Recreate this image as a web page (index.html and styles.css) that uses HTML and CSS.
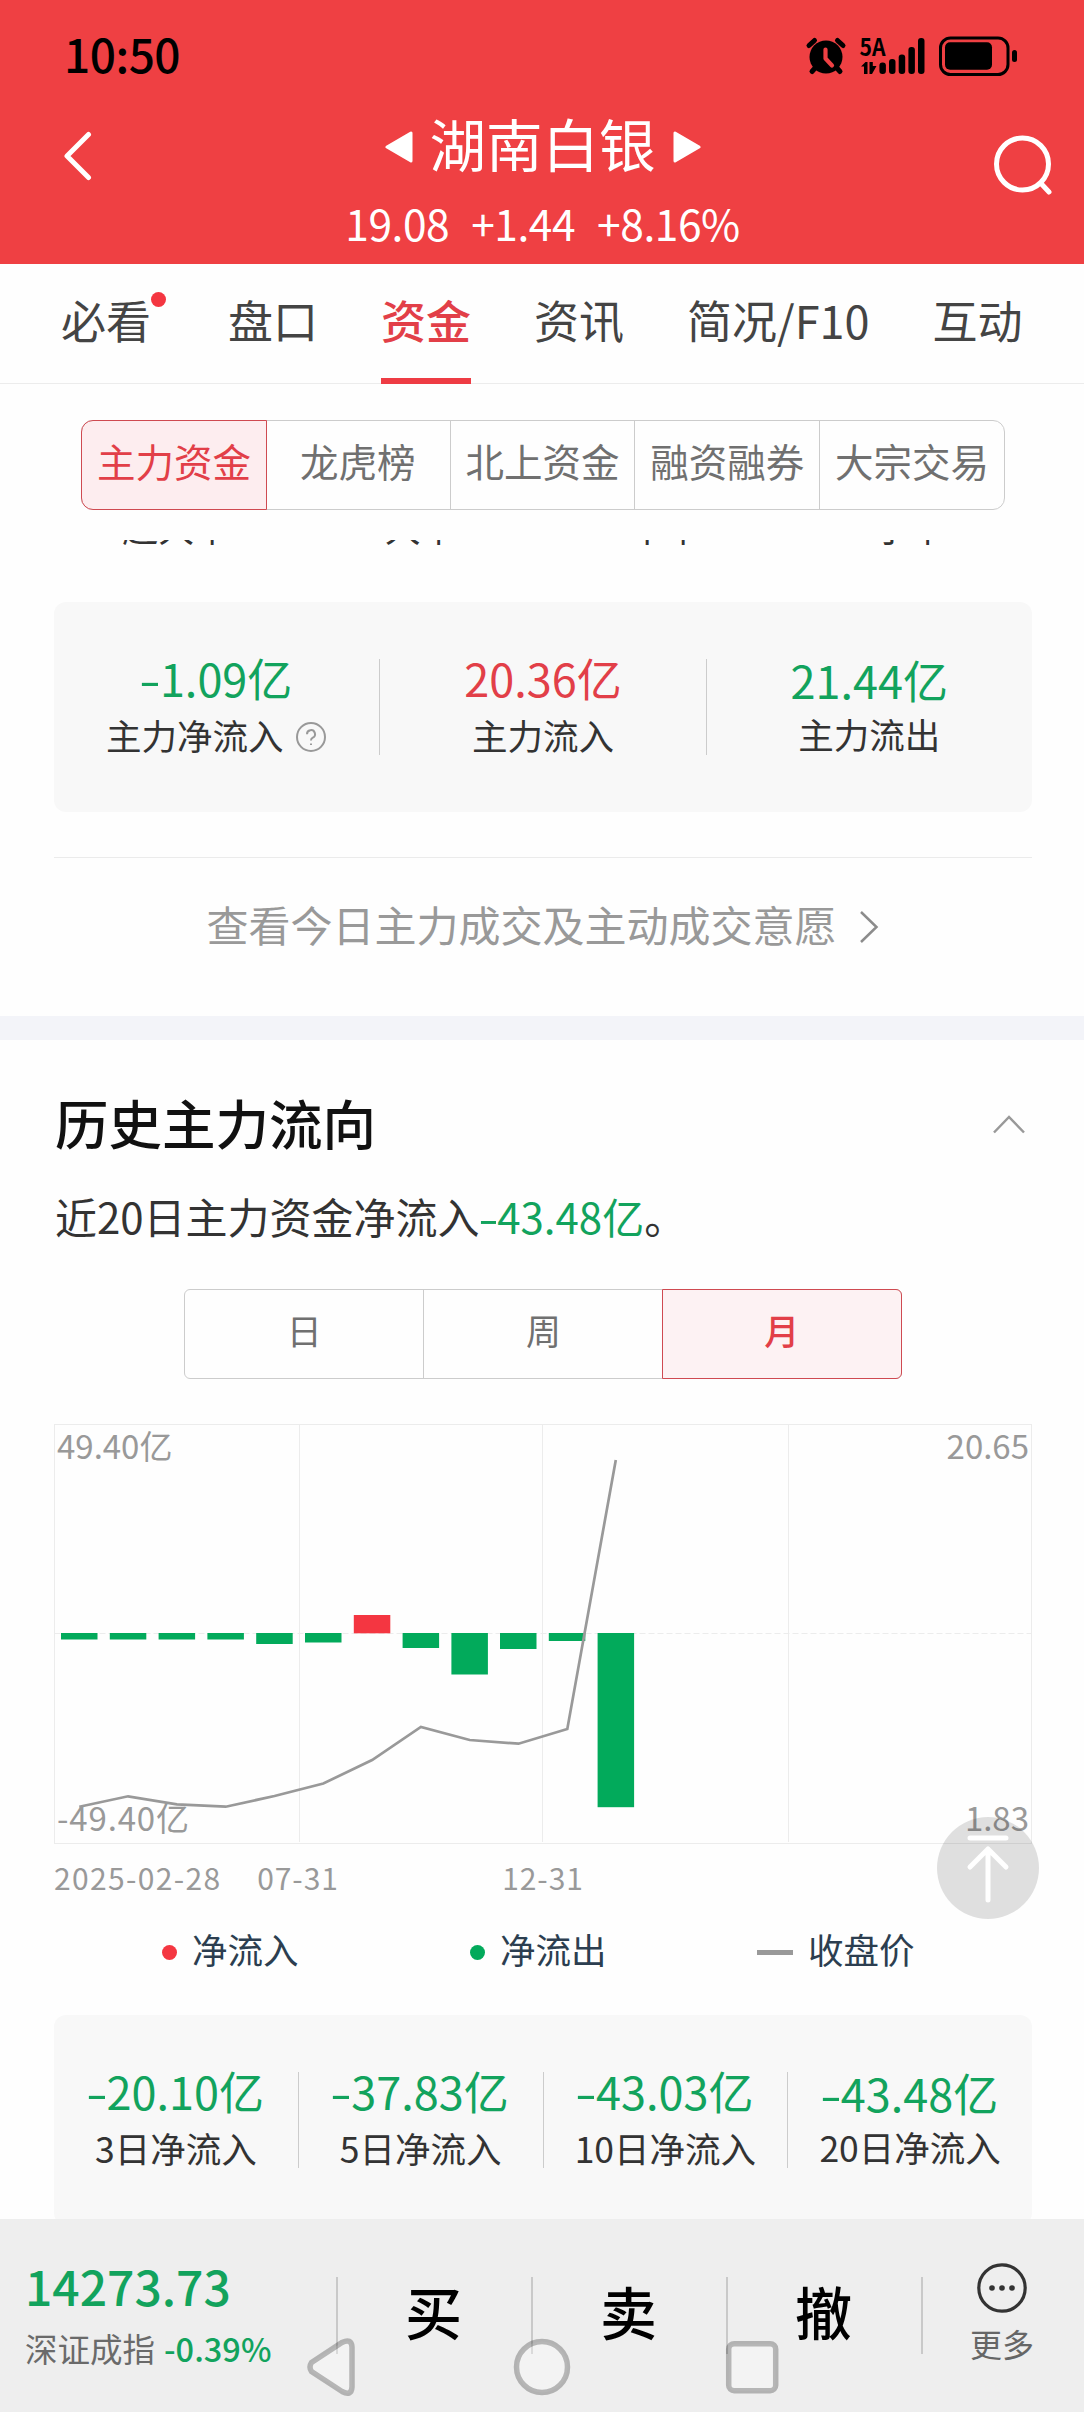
FILE: index.html
```html
<!DOCTYPE html>
<html lang="zh-CN">
<head>
<meta charset="utf-8">
<title>湖南白银 - 资金</title>
<link rel="stylesheet" href="styles.css">
</head>
<body>
<div class="screen">
  <header class="header">
    <div class="status">
      <span class="status-time">10:50</span>
      <svg class="status-icons" width="216" height="44" viewBox="804 34 216 44">
        <circle cx="826" cy="57" r="16.5"/>
        <path d="M809 45.500l5.500-5M843 45.500l-5.500-5" fill="none" stroke="#000" stroke-width="5" stroke-linecap="round"/>
        <path d="M816 67l-4 4.500M836 67l4 4.500" fill="none" stroke="#000" stroke-width="5" stroke-linecap="round"/>
        <path d="M825.500 49.500v9l6.500 7" fill="none" stroke="#ef4043" stroke-width="4.200" stroke-linecap="round" stroke-linejoin="round"/>
        <text class="net-label" x="859.500" y="55.600" textLength="26" lengthAdjust="spacingAndGlyphs">5A</text>
        <path d="M861 66.500l4.500-4.500h2v12h-3.500v-7.500zM869.500 62h3.300v4h3.700l-4.500 8h-2.500z"/>
        <rect x="879.400" y="62.500" width="6.500" height="11.500" rx="3"/>
        <rect x="889" y="59" width="6.500" height="15" rx="3"/>
        <rect x="898.700" y="54.500" width="6.500" height="19.500" rx="3"/>
        <rect x="908.400" y="47" width="6.500" height="27" rx="3"/>
        <rect x="918" y="38" width="6.500" height="36" rx="3"/>
        <rect x="940.500" y="38" width="67.500" height="36.500" rx="10" fill="none" stroke="#000" stroke-width="3"/>
        <rect x="945" y="42.300" width="47" height="27.500" rx="5"/>
        <rect x="1012" y="50" width="5" height="12" rx="2.500"/>
      </svg>
    </div>
    <div class="nav">
      <svg class="nav-back" width="32" height="54" viewBox="0 0 32 54"><path d="M28.500 5.500L7 27l21.500 21.500"/></svg>
      <div class="nav-title">
        <div class="nav-name">
          <svg width="28" height="34" viewBox="0 0 28 34"><path d="M2 17L26 3v28z"/></svg>
          <span>湖南白银</span>
          <svg width="28" height="34" viewBox="0 0 28 34"><path d="M26 17L2 3v28z"/></svg>
        </div>
        <div class="nav-quote"><span>19.08</span><span>+1.44</span><span>+8.16%</span></div>
      </div>
      <svg class="nav-search" width="62" height="62" viewBox="0 0 62 62"><circle cx="29.500" cy="31" r="26"/><path d="M48.500 51l7.500 8"/></svg>
    </div>
  </header>

  <nav class="tabs">
    <span class="tab tab-dot">必看</span>
    <span class="tab">盘口</span>
    <span class="tab tab-active">资金</span>
    <span class="tab">资讯</span>
    <span class="tab">简况/F10</span>
    <span class="tab">互动</span>
  </nav>

  <main class="content">
    <div class="segments">
      <span class="seg seg-active">主力资金</span>
      <span class="seg">龙虎榜</span>
      <span class="seg">北上资金</span>
      <span class="seg">融资融券</span>
      <span class="seg">大宗交易</span>
    </div>

    <div class="scrolled-row">
      <span>超大单</span><span>大单</span><span>中单</span><span>小单</span>
    </div>

    <section class="panel">
      <div class="stat">
        <b class="down"><i class="minus">-</i>1.09亿</b>
        <span class="stat-label">主力净流入
          <svg class="help" width="32" height="32" viewBox="0 0 32 32"><circle cx="16" cy="16" r="14"/><path d="M12 13.200a4 4 0 1 1 5.800 3.500c-1.300.700-1.800 1.300-1.800 2.800"/><path d="M16 22.500v1.500"/></svg>
        </span>
      </div>
      <div class="stat"><b class="up">20.36亿</b><span class="stat-label">主力流入</span></div>
      <div class="stat stat-last"><b class="down">21.44亿</b><span class="stat-label">主力流出</span></div>
    </section>

    <a class="more-link">
      <span>查看今日主力成交及主动成交意愿</span>
      <svg width="22" height="36" viewBox="0 0 22 36"><path d="M3 3l15.500 15L3 33"/></svg>
    </a>

    <div class="band"></div>

    <div class="section-head">
      <h2>历史主力流向</h2>
      <svg width="36" height="24" viewBox="0 0 36 24"><path d="M3 19.500L18 4l15 15.500"/></svg>
    </div>
    <p class="summary">近20日主力资金净流入<span class="down"><i class="minus">-</i>43.48亿</span>。</p>

    <div class="segments period">
      <span class="seg">日</span>
      <span class="seg">周</span>
      <span class="seg seg-active">月</span>
    </div>

    <svg class="chart" width="1084" height="494" viewBox="0 1410 1084 494">
      <g class="grid">
        <rect x="54.500" y="1424.500" width="977" height="419"/>
        <path d="M299.500 1424.500V1842M542.500 1424.500V1842M788.500 1424.500V1842"/>
        <path d="M54.500 1633.500H1031" stroke-dasharray="6 3"/>
      </g>
      <g class="bars-out">
        <rect x="61" y="1633" width="36.500" height="6.500"/>
        <rect x="109.800" y="1633" width="36.500" height="6.500"/>
        <rect x="158.600" y="1633" width="36.500" height="6.500"/>
        <rect x="207.400" y="1633" width="36.500" height="6.500"/>
        <rect x="256.200" y="1633" width="36.500" height="11"/>
        <rect x="305" y="1633" width="36.500" height="9.500"/>
        <rect x="402.600" y="1633" width="36.500" height="15"/>
        <rect x="451.400" y="1633" width="36.500" height="41.500"/>
        <rect x="500" y="1633" width="36.500" height="16"/>
        <rect x="548.800" y="1633" width="36.500" height="8"/>
        <rect x="597.600" y="1633" width="36.500" height="174.200"/>
      </g>
      <rect class="bar-in" x="353.800" y="1615" width="36.500" height="18.300"/>
      <polyline class="price" points="79.300,1806.700 128.100,1796.300 176.900,1804.300 225.700,1806.700 274.500,1796 323.300,1783.500 372.100,1760 420.900,1727 469.700,1740 518.500,1743.700 567.300,1729 615.800,1460"/>
      <g class="axis">
        <text x="57" y="1459.300">49.40亿</text>
        <text x="57" y="1831.300" textLength="132">-49.40亿</text>
        <text x="1029" y="1459.300" text-anchor="end">20.65</text>
        <text x="1029" y="1831.300" text-anchor="end">1.83</text>
      </g>
      <g class="dates">
        <text x="54" y="1890" textLength="167">2025-02-28</text>
        <text x="298" y="1890" text-anchor="middle">07-31</text>
        <text x="543" y="1890" text-anchor="middle">12-31</text>
      </g>
    </svg>

    <div class="legend">
      <span class="legend-item"><i class="dot dot-in"></i>净流入</span>
      <span class="legend-item"><i class="dot dot-out"></i>净流出</span>
      <span class="legend-item"><i class="dash"></i>收盘价</span>
    </div>

    <section class="panel panel-history">
      <div class="stat"><b class="down"><i class="minus">-</i>20.10亿</b><span class="stat-label">3日净流入</span></div>
      <div class="stat"><b class="down"><i class="minus">-</i>37.83亿</b><span class="stat-label">5日净流入</span></div>
      <div class="stat"><b class="down"><i class="minus">-</i>43.03亿</b><span class="stat-label">10日净流入</span></div>
      <div class="stat stat-last"><b class="down"><i class="minus">-</i>43.48亿</b><span class="stat-label">20日净流入</span></div>
    </section>
  </main>

  <footer class="bottom">
    <div class="index">
      <span class="index-value">14273.73</span>
      <span class="index-name">深证成指<em>-0.39%</em></span>
    </div>
    <span class="trade">买</span>
    <span class="trade">卖</span>
    <span class="trade">撤</span>
    <div class="more">
      <svg width="52" height="52" viewBox="0 0 52 52"><circle class="ring" cx="26" cy="26" r="23.200"/><circle cx="16" cy="26" r="2.800"/><circle cx="26" cy="26" r="2.800"/><circle cx="36" cy="26" r="2.800"/></svg>
      <span>更多</span>
    </div>
  </footer>

  <svg class="to-top" width="102" height="102" viewBox="0 0 102 102">
    <circle cx="51" cy="51" r="51"/>
    <path d="M33 21h36M51 61V32M51 83V32M33 50l18-18 18 18"/>
  </svg>

  <svg class="system-nav" width="484" height="64" viewBox="300 2335 484 64">
    <path d="M311.500 2362.500L342 2342.500Q351.500 2338 352 2347V2387Q351.500 2396.500 342 2391.500L311.500 2371.500Q308.500 2367 311.500 2362.500z"/>
    <circle cx="542" cy="2367" r="25.500"/>
    <rect x="728.700" y="2343.700" width="47" height="47" rx="5.500"/>
  </svg>
</div>
</body>
</html>
```

FILE: styles.css
```css
* {
  box-sizing: border-box;
}

body {
  margin: 0;
  background: #fefefe;
  font-family: "Noto Sans CJK SC", "Noto Sans", sans-serif;
  color: #333;
}

.screen {
  position: relative;
  width: 1084px;
  height: 2412px;
  overflow: hidden;
}

.down { color: #12a35d; }
.up { color: #e23f48; }

.minus {
  display: inline-block;
  width: 0.420em;
  font-style: normal;
  transform: scaleX(1.400);
  transform-origin: 25% 50%;
}

/* header */
.header {
  height: 264px;
  background: #ef4043;
}

.status {
  display: flex;
  justify-content: space-between;
  align-items: flex-start;
  height: 110px;
  padding: 34px 64px 0;
}

.status-time {
  margin-top: -11px;
  font-size: 46px;
  line-height: 60px;
  letter-spacing: -0.500px;
  font-weight: 500;
  color: #000;
}

.net-label {
  font-size: 24px;
  font-weight: 700;
}

.nav {
  display: flex;
  justify-content: space-between;
  align-items: flex-start;
  padding: 0 29px 0 60px;
}

.nav svg path { fill: #fff; }

.nav .nav-back {
  margin-top: 19px;
}

.nav .nav-back path,
.nav .nav-search circle,
.nav .nav-search path {
  fill: none;
  stroke: #fff;
  stroke-width: 5;
  stroke-linecap: round;
  stroke-linejoin: round;
}

.nav .nav-search { margin-top: 23px; }

.nav-title {
  width: 480px;
  text-align: center;
  color: #fff;
}

.nav-name {
  display: flex;
  justify-content: center;
  align-items: center;
  gap: 17px;
  height: 64px;
  font-size: 56.500px;
  line-height: 64px;
}

.nav-name svg {
  margin-top: 10px;
  stroke: #fff;
  stroke-width: 3;
  stroke-linejoin: round;
}

.nav-quote {
  display: flex;
  justify-content: center;
  gap: 22px;
  margin-top: 24px;
  font-size: 42.500px;
  line-height: 50px;
  letter-spacing: -0.450px;
}

/* tabs */
.tabs {
  display: flex;
  gap: 63px;
  height: 120px;
  padding-left: 61px;
  border-bottom: 1px solid #ececec;
  font-size: 45px;
  line-height: 112px;
  color: #444;
}

.tab { position: relative; }

.tab-dot { margin-right: 14px; }

.tab-dot::after {
  content: "";
  position: absolute;
  top: 28px;
  right: -15px;
  width: 15px;
  height: 15px;
  border-radius: 50%;
  background: #f43641;
}

.tab-active {
  height: 120px;
  border-bottom: 6px solid #ee3c44;
  font-weight: 500;
  color: #e23f48;
}

/* segmented controls */
.content {
  display: flow-root;
  height: 1835px;
  overflow: hidden;
}

.segments {
  display: flex;
  width: 924px;
  height: 90px;
  margin: 36px auto 0 81px;
  border: 1.500px solid #ccc;
  border-radius: 12px;
  font-size: 38.500px;
  line-height: 78px;
  color: #707070;
}

.seg {
  flex: 1;
  text-align: center;
}

.seg + .seg { border-left: 1.500px solid #ccc; }

.seg-active {
  margin: -1px;
  border: 1.500px solid #cf4a51;
  border-radius: 12px 0 0 12px;
  background: #fdedef;
  color: #e23f48;
}

.seg-active + .seg { border-left: 0; }

.scrolled-row {
  display: flex;
  align-items: flex-end;
  height: 6px;
  margin: 30px 52px 0 54px;
  overflow: hidden;
  font-size: 36px;
  line-height: 40px;
}

.scrolled-row span {
  flex: 1;
  height: 38px;
  margin-bottom: 2px;
  text-align: center;
}

/* statistic panels */
.panel {
  display: flex;
  width: 978px;
  height: 210px;
  margin: 56px 0 0 54px;
  padding-top: 57px;
  border-radius: 12px;
  background: #f8f8f8;
}

.stat {
  display: flex;
  flex: 1;
  flex-direction: column;
  align-items: center;
  height: 96px;
  border-right: 1px solid #ccc;
}

.stat b {
  font-size: 45px;
  line-height: 37px;
  font-weight: 400;
}

.stat-label {
  display: flex;
  align-items: center;
  margin-top: 19px;
  font-size: 35.500px;
  line-height: 40px;
}

.stat-last {
  padding-top: 2px;
  border-right: 0;
}

.stat-last .stat-label { margin-top: 16px; }

.help {
  margin: 3px 0 0 12px;
  fill: none;
  stroke: #999;
  stroke-width: 2;
}

/* link row */
.more-link {
  display: flex;
  justify-content: center;
  gap: 21px;
  width: 978px;
  height: 159px;
  margin: 45px 0 0 54px;
  padding-top: 36px;
  border-top: 1px solid #ebebeb;
  font-size: 42px;
  line-height: 60px;
  color: #999;
}

.more-link svg {
  margin-top: 15px;
  fill: none;
  stroke: #8c8c8c;
  stroke-width: 2.500;
}

.band {
  height: 24px;
  background: #f3f4f9;
}

/* history section */
.section-head {
  display: flex;
  justify-content: space-between;
  align-items: center;
  padding: 47px 57px 0 55px;
}

.section-head h2 {
  margin: 0;
  font-size: 53.500px;
  line-height: 70px;
  font-weight: 500;
  color: #111;
}

.section-head svg {
  margin-top: 6px;
  fill: none;
  stroke: #999;
  stroke-width: 2.500;
}

.summary {
  margin: 29px 0 0 55px;
  font-size: 42px;
  line-height: 60px;
}

.period {
  width: 718px;
  margin: 43px 0 0 184px;
  border-radius: 6px;
  font-size: 35px;
  line-height: 80px;
}

.period .seg-active {
  border: 1.500px solid #cf4a51;
  border-radius: 0 6px 6px 0;
  background: #fdf2f3;
  font-weight: 500;
}

/* chart */
.chart {
  display: block;
  margin-top: 31px;
}

.grid {
  fill: none;
  stroke: #ececec;
}

.bars-out { fill: #02aa5b; }
.bar-in { fill: #f43641; }

.price {
  fill: none;
  stroke: #999;
  stroke-width: 2.700;
}

.axis {
  font-size: 33px;
  fill: #999;
}

.dates {
  font-size: 30px;
  letter-spacing: 0.900px;
  fill: #999;
}

.legend {
  display: flex;
  height: 50px;
  margin-top: 20px;
  padding-left: 162px;
  font-size: 35.500px;
  line-height: 50px;
  color: #2c3e50;
}

.legend-item {
  display: flex;
  align-items: center;
}

.legend-item:nth-child(1) { width: 308px; }
.legend-item:nth-child(2) { width: 287px; }

.dot {
  width: 15px;
  height: 15px;
  margin: 7px 15px 0 0;
  border-radius: 50%;
}

.dot-in { background: #f43641; }
.dot-out { background: #02aa5b; }

.dash {
  width: 36px;
  height: 5px;
  margin: 6px 15px 0 0;
  background: #999;
}

.panel-history { margin-top: 41px; }

/* bottom bar */
.bottom {
  display: flex;
  height: 193px;
  padding-top: 58px;
  background: #eee;
}

.index {
  display: flex;
  flex-direction: column;
  width: 338px;
  padding-left: 25px;
  border-right: 2px solid #c9c9c9;
}

.index, .trade { height: 77px; }

.index-value {
  margin-top: -22px;
  font-size: 48px;
  line-height: 60px;
  font-weight: 500;
  color: #12a35d;
}

.index-name {
  margin-top: 15px;
  font-size: 32.500px;
  line-height: 36px;
  white-space: nowrap;
  color: #6a6a6a;
}

.index-name em {
  margin-left: 9px;
  font-style: normal;
  font-weight: 500;
  color: #12a35d;
}

.trade {
  width: 195px;
  padding-right: 2px;
  border-right: 2px solid #c9c9c9;
  font-size: 57px;
  line-height: 67px;
  font-weight: 500;
  text-align: center;
  color: #000;
}

.more {
  display: flex;
  flex-direction: column;
  align-items: center;
  width: 158px;
  margin-top: -15px;
  font-size: 32px;
  line-height: 40px;
  color: #666;
}

.more svg { fill: #333; }

.more .ring {
  fill: none;
  stroke: #333;
  stroke-width: 3.200;
}

.more span { margin-top: 9px; }

/* overlays */
.to-top {
  position: absolute;
  left: 937px;
  top: 1817px;
}

.to-top circle { fill: rgba(0, 0, 0, 0.12); }

.to-top path {
  fill: none;
  stroke: #fff;
  stroke-width: 5;
  stroke-linecap: round;
  stroke-linejoin: round;
}

.system-nav {
  position: absolute;
  left: 300px;
  top: 2335px;
  fill: rgba(255, 255, 255, 0.3);
  stroke: rgba(0, 0, 0, 0.25);
  stroke-width: 5.500;
}
```
